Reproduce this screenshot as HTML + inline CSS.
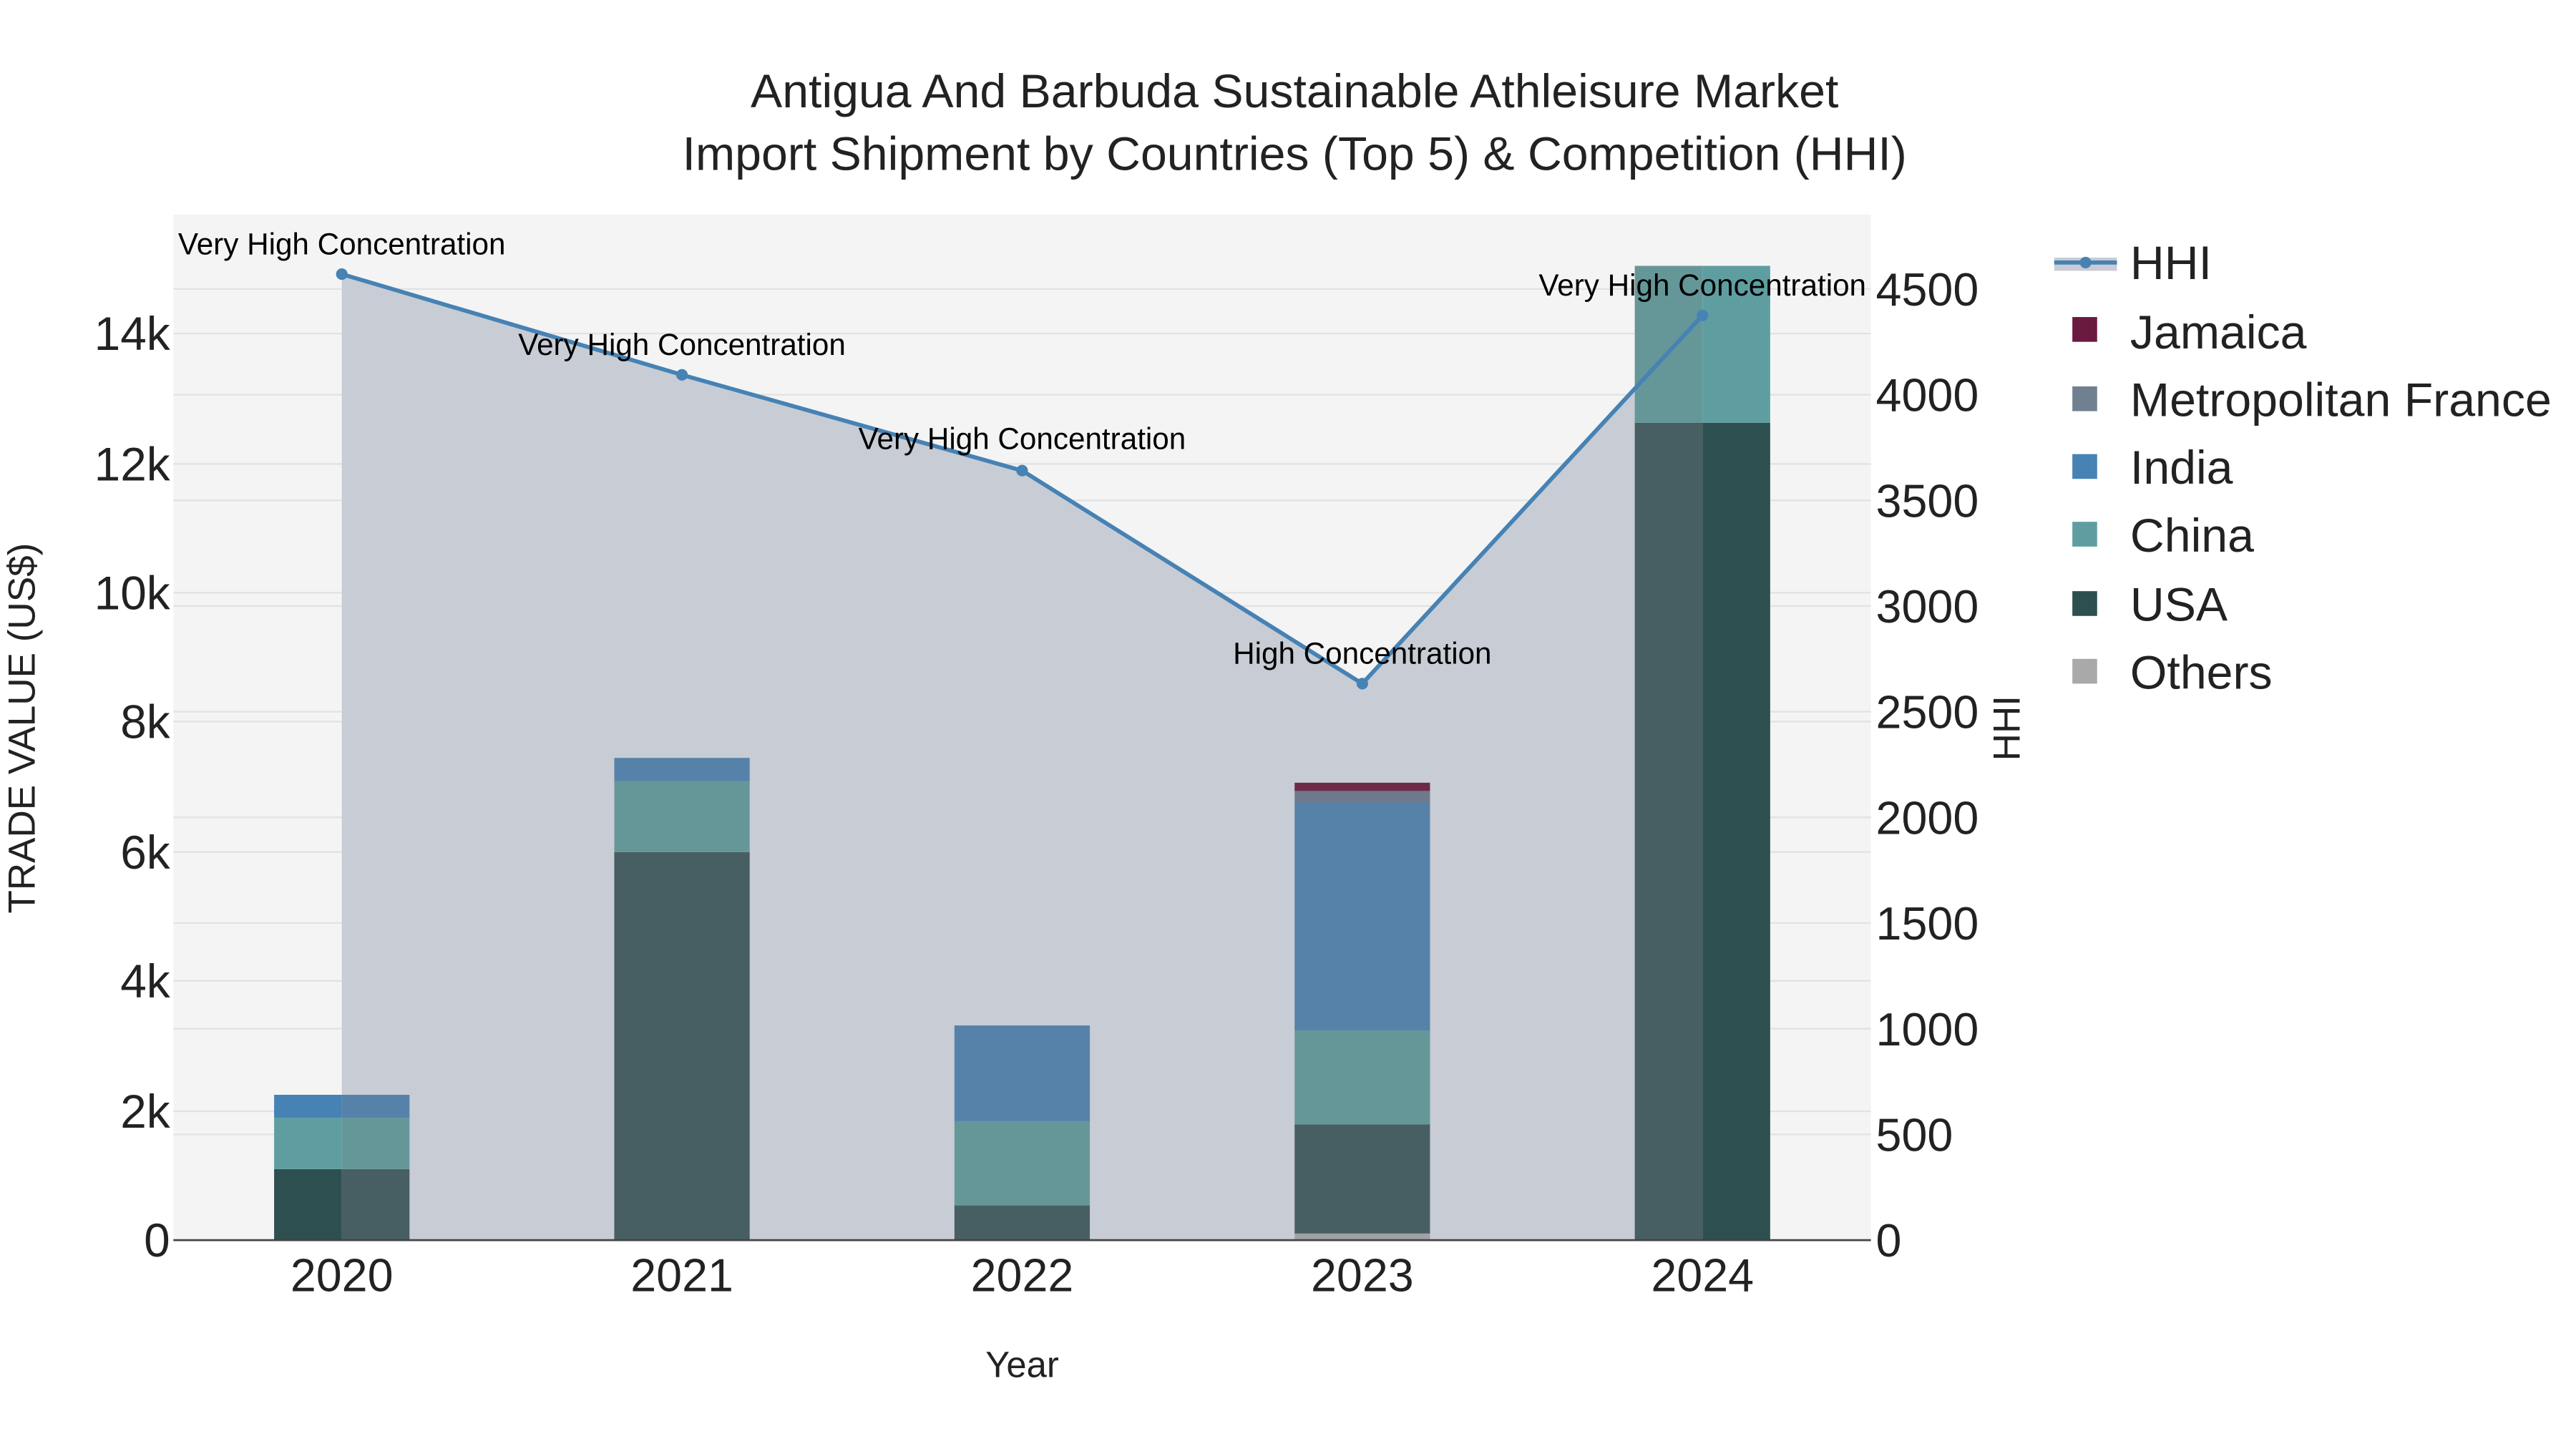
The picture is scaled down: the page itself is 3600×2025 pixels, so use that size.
<!DOCTYPE html>
<html><head><meta charset="utf-8"><style>html,body{margin:0;padding:0;background:#fff}svg{display:block}text{font-family:"Liberation Sans",sans-serif}</style></head>
<body>
<svg width="3600" height="2025" viewBox="0 0 1560 877.5" xmlns="http://www.w3.org/2000/svg">
<rect width="1560" height="877.5" fill="#fff"/>
<rect x="105" y="130" width="1028" height="621" fill="#f4f4f4"/>
<g stroke="#e2e2e2" stroke-width="1">
<line x1="105" x2="1133" y1="673" y2="673"/><line x1="105" x2="1133" y1="594" y2="594"/><line x1="105" x2="1133" y1="516" y2="516"/><line x1="105" x2="1133" y1="437" y2="437"/><line x1="105" x2="1133" y1="359" y2="359"/><line x1="105" x2="1133" y1="281" y2="281"/><line x1="105" x2="1133" y1="202" y2="202"/>
<line x1="105" x2="1133" y1="687" y2="687"/><line x1="105" x2="1133" y1="623" y2="623"/><line x1="105" x2="1133" y1="559" y2="559"/><line x1="105" x2="1133" y1="495" y2="495"/><line x1="105" x2="1133" y1="431" y2="431"/><line x1="105" x2="1133" y1="367" y2="367"/><line x1="105" x2="1133" y1="303" y2="303"/><line x1="105" x2="1133" y1="239" y2="239"/><line x1="105" x2="1133" y1="175" y2="175"/>
</g>
<polygon points="207,751 207,166 413,227 619,285 825,414 1031,191 1031,751" fill="#c8ccd4"/>
<rect x="166" y="708" width="41" height="43" fill="#2d4f4f"/><rect x="166" y="677" width="41" height="31" fill="#5f9ea0"/><rect x="166" y="663" width="41" height="14" fill="#4682b4"/>
<rect x="207" y="708" width="41" height="43" fill="#475f63"/><rect x="207" y="677" width="41" height="31" fill="#659799"/><rect x="207" y="663" width="41" height="14" fill="#5682aa"/>
<rect x="372" y="516" width="82" height="235" fill="#475f63"/><rect x="372" y="473" width="82" height="43" fill="#659799"/><rect x="372" y="459" width="82" height="14" fill="#5682aa"/>
<rect x="578" y="730" width="82" height="21" fill="#475f63"/><rect x="578" y="679" width="82" height="51" fill="#659799"/><rect x="578" y="621" width="82" height="58" fill="#5682aa"/>
<rect x="784" y="747" width="82" height="4" fill="#a0a2a6"/><rect x="784" y="681" width="82" height="66" fill="#475f63"/><rect x="784" y="624" width="82" height="57" fill="#659799"/><rect x="784" y="486" width="82" height="138" fill="#5682aa"/><rect x="784" y="479" width="82" height="7" fill="#6e7a8c"/><rect x="784" y="474" width="82" height="5" fill="#6d2a48"/>
<rect x="990" y="256" width="41" height="495" fill="#475f63"/><rect x="990" y="161" width="41" height="95" fill="#659799"/>
<rect x="1031" y="256" width="41" height="495" fill="#2d4f4f"/><rect x="1031" y="161" width="41" height="95" fill="#5f9ea0"/>
<line x1="105" x2="1133" y1="751" y2="751" stroke="#444" stroke-width="1.2"/>
<polyline points="207,166 413,227 619,285 825,414 1031,191" fill="none" stroke="#4682b4" stroke-width="2.5"/>
<g fill="#4682b4"><circle cx="207" cy="166" r="3.5"/><circle cx="413" cy="227" r="3.5"/><circle cx="619" cy="285" r="3.5"/><circle cx="825" cy="414" r="3.5"/><circle cx="1031" cy="191" r="3.5"/></g>
<g font-size="18.3" text-anchor="middle" fill="#000">
<text x="207" y="154">Very High Concentration</text><text x="413" y="215">Very High Concentration</text><text x="619" y="272">Very High Concentration</text><text x="825" y="402">High Concentration</text><text x="1031" y="179">Very High Concentration</text>
</g>
<g font-size="28.7" text-anchor="middle" fill="#222"><text x="784" y="65">Antigua And Barbuda Sustainable Athleisure Market</text><text x="784" y="103">Import Shipment by Countries (Top 5) &amp; Competition (HHI)</text></g>
<g font-size="28.5" text-anchor="end" fill="#222">
<text x="103" y="761">0</text><text x="103" y="683">2k</text><text x="103" y="604">4k</text><text x="103" y="526">6k</text><text x="103" y="447">8k</text><text x="103" y="369">10k</text><text x="103" y="291">12k</text><text x="103" y="212">14k</text>
</g>
<g font-size="28" fill="#222">
<text x="1136" y="761">0</text><text x="1136" y="697">500</text><text x="1136" y="633">1000</text><text x="1136" y="569">1500</text><text x="1136" y="505">2000</text><text x="1136" y="441">2500</text><text x="1136" y="377">3000</text><text x="1136" y="313">3500</text><text x="1136" y="249">4000</text><text x="1136" y="185">4500</text>
</g>
<g font-size="28" text-anchor="middle" fill="#222"><text x="207" y="782">2020</text><text x="413" y="782">2021</text><text x="619" y="782">2022</text><text x="825" y="782">2023</text><text x="1031" y="782">2024</text></g>
<text x="619" y="834" font-size="22" text-anchor="middle" fill="#222">Year</text>
<text transform="translate(21,441) rotate(-90)" font-size="23" text-anchor="middle" fill="#222">TRADE VALUE (US$)</text>
<text transform="translate(1223,441) rotate(-90)" font-size="23" text-anchor="middle" fill="#222">HHI</text>
<rect x="1244" y="156" width="38" height="8" fill="#c8ccd4"/>
<line x1="1244" x2="1282" y1="159" y2="159" stroke="#4682b4" stroke-width="2.5"/><circle cx="1263" cy="159" r="3.5" fill="#4682b4"/>
<rect x="1255" y="192" width="15" height="15" fill="#6b1a3f"/><rect x="1255" y="234" width="15" height="15" fill="#708090"/><rect x="1255" y="275" width="15" height="15" fill="#4682b4"/><rect x="1255" y="316" width="15" height="15" fill="#5f9ea0"/><rect x="1255" y="358" width="15" height="15" fill="#2d4f4f"/><rect x="1255" y="399" width="15" height="15" fill="#a9a9a9"/>
<g font-size="28.7" fill="#222"><text x="1290" y="169">HHI</text><text x="1290" y="211">Jamaica</text><text x="1290" y="252">Metropolitan France</text><text x="1290" y="293">India</text><text x="1290" y="334">China</text><text x="1290" y="376">USA</text><text x="1290" y="417">Others</text></g>
</svg>
</body></html>
